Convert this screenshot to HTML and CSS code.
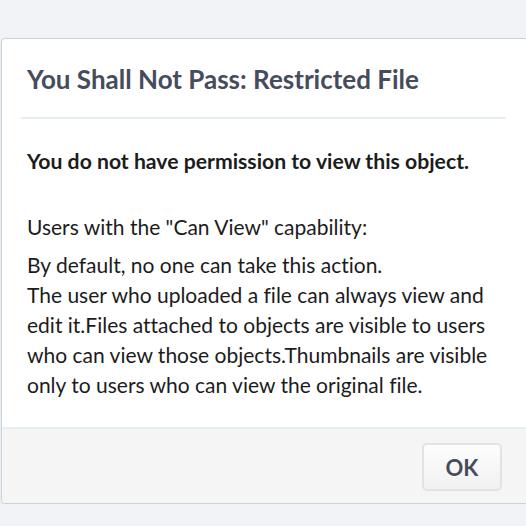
FILE: index.html
```html
<!DOCTYPE html>
<html>
<head>
<meta charset="utf-8">
<link rel="stylesheet" href="styles.css">
</head>
<body>
<div class="dialog">
  <div class="head">
    <h1 class="title">You Shall Not Pass: Restricted File</h1>
  </div>
  <div class="body">
    <p class="lead">You do not have permission to view this object.</p>
    <p class="cap">Users with the "Can View" capability:</p>
    <p class="desc">By default, no one can take this action.<br>The user who uploaded a file can always view and edit it.Files attached to objects are visible to users who can view those objects.Thumbnails are visible only to users who can view the original file.</p>
  </div>
  <div class="tail">
    <button class="btn">OK</button>
  </div>
</div>
</body>
</html>
```
FILE: styles.css
```css
html, body {
  margin: 0;
  padding: 0;
  overflow: hidden;
  background: #f1f3f6;
  font-family: Lato, "Open Sans", sans-serif;
  font-variant-ligatures: none;
}
body {
  padding-top: 38px;
  padding-left: 1px;
}
.dialog {
  box-sizing: border-box;
  width: 528px;
  background: #fff;
  border: 1px solid #c9d3de;
  border-radius: 4px;
  box-shadow: 0 1px 3px rgba(55, 70, 90, 0.08);
}
.head {
  padding: 0 22px 0 19px;
}
.title {
  margin: 0;
  padding: 25px 6px 23px;
  font-size: 26px;
  font-weight: bold;
  color: #464c5c;
  line-height: 30px;
  border-bottom: 2px solid #e5eef3;
}
.body {
  padding: 27px 27px 27px 25px;
  color: #1c1c1c;
  font-size: 21px;
}
.body p {
  margin: 0;
}
.lead {
  font-weight: bold;
  font-size: 21.2px;
  line-height: 30px;
  margin-bottom: 36px !important;
}
.cap {
  line-height: 30px;
  margin-bottom: 8px !important;
}
.desc {
  line-height: 30px;
}
.tail {
  background: #f5f5f5;
  border-top: 2px solid #e5eef3;
  padding: 14px 26px 12px;
  display: flex;
  justify-content: flex-end;
  border-radius: 0 0 4px 4px;
}
.btn {
  width: 80px;
  height: 48px;
  border: 2px solid #dfe3ea;
  border-radius: 5px;
  background: linear-gradient(#fdfdfd, #f1f1f1);
  font-family: Lato, sans-serif;
  font-variant-ligatures: none;
  font-weight: bold;
  font-size: 22px;
  color: #464c5c;
}
```
